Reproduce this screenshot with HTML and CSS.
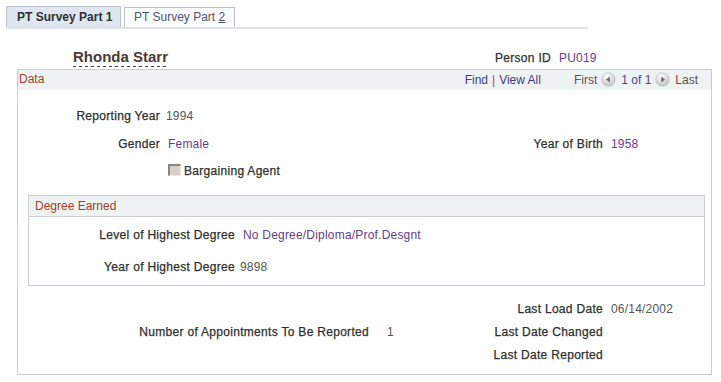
FILE: index.html
```html
<!DOCTYPE html>
<html>
<head>
<meta charset="utf-8">
<title>PT Survey</title>
<link rel="stylesheet" href="styles.css">
</head>
<body>
<div class="tabs">
  <div class="tab tab-active">PT Survey Part 1</div>
  <div class="tab">PT Survey Part <u>2</u></div>
</div>

<div class="pagehead">
  <span class="name">Rhonda Starr</span>
  <span class="lbl">Person ID</span>
  <span class="val dd pid">PU019</span>
</div>

<div class="box">
  <div class="box-head">
    <span class="box-title">Data</span>
    <div class="nav">
      <span class="link">Find</span><span class="sep">|</span><span class="link">View All</span>
      <span class="first">First</span>
      <svg class="navicon" width="15" height="15" viewBox="0 0 15 15">
        <defs>
          <radialGradient id="gp" cx="0.4" cy="0.3" r="0.75">
            <stop offset="0" stop-color="#ffffff"/>
            <stop offset="1" stop-color="#bcbcbc"/>
          </radialGradient>
        </defs>
        <circle cx="7.5" cy="7.5" r="6.8" fill="url(#gp)" stroke="#c6c6c6" stroke-width="0.8"/>
        <path d="M5 7.5 L8.8 4.6 L8.8 10.4 Z" fill="#6a6a6a"/>
      </svg>
      <span class="count">1 of 1</span>
      <svg class="navicon" width="15" height="15" viewBox="0 0 15 15">
        <defs>
          <radialGradient id="gn" cx="0.4" cy="0.3" r="0.75">
            <stop offset="0" stop-color="#ffffff"/>
            <stop offset="1" stop-color="#bcbcbc"/>
          </radialGradient>
        </defs>
        <circle cx="7.5" cy="7.5" r="6.8" fill="url(#gn)" stroke="#c6c6c6" stroke-width="0.8"/>
        <path d="M10 7.5 L6.2 4.6 L6.2 10.4 Z" fill="#6a6a6a"/>
      </svg>
      <span class="last">Last</span>
    </div>
  </div>

  <div class="grid-top">
    <span class="lbl">Reporting Year</span>
    <span class="val">1994</span>
    <span></span>
    <span></span>

    <span class="lbl">Gender</span>
    <span class="val dd">Female</span>
    <span class="lbl">Year of Birth</span>
    <span class="val dd birth">1958</span>

    <span></span>
    <span class="check-cell"><span class="checkbox"></span><span class="lbl">Bargaining Agent</span></span>
    <span></span>
    <span></span>
  </div>

  <div class="subbox">
    <div class="subbox-head">Degree Earned</div>
    <div class="grid-degree">
      <span class="lbl">Level of Highest Degree</span>
      <span class="val dd deg">No Degree/Diploma/Prof.Desgnt</span>
      <span class="lbl">Year of Highest Degree</span>
      <span class="val yr">9898</span>
    </div>
  </div>

  <div class="grid-bottom">
    <span></span>
    <span></span>
    <span class="lbl">Last Load Date</span>
    <span class="val date">06/14/2002</span>

    <span class="lbl">Number of Appointments To Be Reported</span>
    <span class="val one">1</span>
    <span class="lbl">Last Date Changed</span>
    <span></span>

    <span></span>
    <span></span>
    <span class="lbl">Last Date Reported</span>
    <span></span>
  </div>
</div>
</body>
</html>
```
FILE: styles.css
```css
body {
  margin: 0;
  font-family: "Liberation Sans", Arial, sans-serif;
  font-size: 12px;
  line-height: 14px;
  color: #333;
  background: #fff;
}

/* Tabs */
.tabs {
  display: flex;
  align-items: flex-end;
  gap: 3px;
  margin-left: 6px;
  padding-top: 6px;
  width: 582px;
  border-bottom: 2px solid #dbe4ef;
}
.tab {
  box-sizing: border-box;
  width: 111px;
  height: 20px;
  padding: 2px 0 0 9px;
  border: 1px solid #b9c1cc;
  border-bottom: none;
  background: #fbfcfd;
  color: #4d5670;
  white-space: nowrap;
}
.tab u { text-decoration: underline; }
.tab-active {
  width: 115px;
  height: 21px;
  padding: 3px 0 0 10px;
  background: #dfe6ef;
  border-color: #b7c3d1;
  color: #2f2f2f;
  font-weight: bold;
}

/* Page header */
.pagehead {
  display: grid;
  grid-template-columns: 200px 278px auto;
  align-items: baseline;
  padding: 19px 0 0 73px;
  height: 21px;
}
.name {
  justify-self: start;
  font-size: 15px;
  line-height: 17px;
  font-weight: bold;
  color: #4b3a36;
  padding-bottom: 2px;
  background-image: repeating-linear-gradient(to right, #3a3a3a 0 3px, transparent 3px 6px);
  background-size: 100% 1px;
  background-repeat: no-repeat;
  background-position: left bottom;
}
.pagehead .lbl { text-align: right; }
.pid { padding-left: 7px; }

/* Labels / values */
.lbl {
  color: #2e2e2e;
  text-align: right;
  white-space: nowrap;
  letter-spacing: 0.3px;
  -webkit-text-stroke: 0.25px #2e2e2e;
}
.val {
  color: #555;
  padding-left: 6px;
  white-space: nowrap;
  letter-spacing: 0.2px;
}
.val.dd { color: #63408c; padding-left: 8px; }

/* Data box */
.box {
  box-sizing: border-box;
  margin: 0 0 0 17px;
  width: 695px;
  height: 306px;
  border: 1px solid #c9ced3;
}
.box-head {
  display: flex;
  background: #eff2f3;
  padding: 2px 13px 3px 1px;
}
.box-title { color: #a2402f; }
.nav {
  margin-left: auto;
  display: flex;
  align-items: center;
  white-space: nowrap;
}
.link { color: #3f3c8e; }
.sep { color: #c2326a; margin: 0 4px 0 4px; }
.first { color: #555; margin-left: 33px; }
.navicon { margin: 0 5px 0 4px; display: block; }
.count { color: #4a4790; }
.last { color: #555; }

/* Top grid */
.grid-top {
  display: grid;
  grid-template-columns: 142px 300px 143px 1fr;
  grid-template-rows: 28px 27px 14px;
  margin-top: 19px;
}
.birth { padding-left: 6px; }
.check-cell {
  display: flex;
  align-items: flex-start;
  gap: 3px;
  padding-left: 8px;
}
.checkbox {
  box-sizing: border-box;
  width: 13px;
  height: 12px;
  background: #d6d2cb;
  border-top: 2px solid #858585;
  border-left: 2px solid #858585;
  border-right: 1px solid #e8e6e2;
  border-bottom: 1px solid #e8e6e2;
}
.check-cell .lbl { text-align: left; }

/* Degree sub box */
.subbox {
  margin: 17px 6px 0 10px;
  border: 1px solid #c9ced3;
}
.subbox-head {
  background: #eff2f3;
  border-bottom: 1px solid #c9ced3;
  padding: 3px 0 3px 6px;
  color: #a2402f;
}
.grid-degree {
  display: grid;
  grid-template-columns: 206px 1fr;
  grid-template-rows: 32px 14px;
  padding: 11px 0 11px 0;
}
.deg { padding-left: 8px; }
.yr { padding-left: 5px; }

/* Bottom grid */
.grid-bottom {
  display: grid;
  grid-template-columns: 351px 111px 123px 1fr;
  grid-template-rows: 23px 23px 14px;
  margin-top: 16px;
}
.one { padding-left: 18px; }
.date { padding-left: 8px; }
```
